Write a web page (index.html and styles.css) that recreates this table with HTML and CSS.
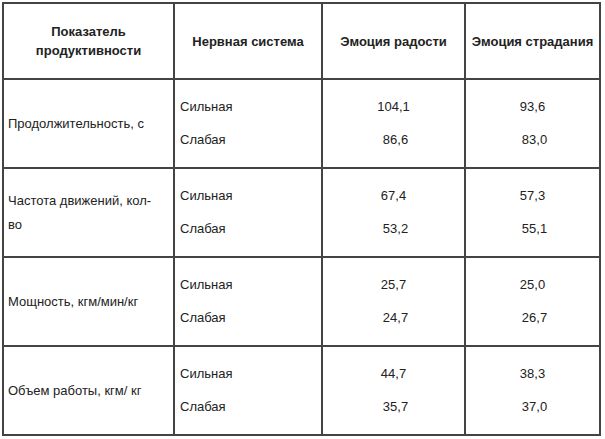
FILE: index.html
```html
<!DOCTYPE html>
<html lang="ru">
<head>
<meta charset="utf-8">
<link rel="stylesheet" href="styles.css">
</head>
<body>
<div class="table">
  <div class="cell head">Показатель<br>продуктивности</div>
  <div class="cell head">Нервная система</div>
  <div class="cell head">Эмоция радости</div>
  <div class="cell head">Эмоция страдания</div>

  <div class="cell label">Продолжительность, с</div>
  <div class="cell pair left"><span>Сильная</span><span>Слабая</span></div>
  <div class="cell pair num"><span>104,1</span><span class="shift">86,6</span></div>
  <div class="cell pair num"><span>93,6</span><span class="shift">83,0</span></div>

  <div class="cell label">Частота движений, кол-<br>во</div>
  <div class="cell pair left"><span>Сильная</span><span>Слабая</span></div>
  <div class="cell pair num"><span>67,4</span><span class="shift">53,2</span></div>
  <div class="cell pair num"><span>57,3</span><span class="shift">55,1</span></div>

  <div class="cell label">Мощность, кгм/мин/кг</div>
  <div class="cell pair left"><span>Сильная</span><span>Слабая</span></div>
  <div class="cell pair num"><span>25,7</span><span class="shift">24,7</span></div>
  <div class="cell pair num"><span>25,0</span><span class="shift">26,7</span></div>

  <div class="cell label">Объем работы, кгм/ кг</div>
  <div class="cell pair left"><span>Сильная</span><span>Слабая</span></div>
  <div class="cell pair num"><span>44,7</span><span class="shift">35,7</span></div>
  <div class="cell pair num"><span>38,3</span><span class="shift">37,0</span></div>
</div>
</body>
</html>
```
FILE: styles.css
```css
html, body {
  margin: 0;
  padding: 0;
  background: #ffffff;
}
body {
  font-family: "Liberation Sans", Arial, sans-serif;
  font-size: 13px;
  color: #222222;
}
.table {
  margin: 2px 0 0 2px;
  width: 599px;
  box-sizing: border-box;
  display: grid;
  grid-template-columns: 169px 146px 141px 133px;
  grid-template-rows: 74px repeat(4, 87px);
  gap: 2px;
  padding: 2px;
  background: #444444;
}
.cell {
  background: #ffffff;
  box-sizing: border-box;
  display: flex;
  align-items: center;
  padding: 0 5px;
}
.head {
  font-weight: bold;
  justify-content: center;
  text-align: center;
  line-height: 19px;
}
.label {
  display: block;
  align-self: stretch;
  padding: 0 4px;
  line-height: 24px;
  display: flex;
  flex-direction: column;
  justify-content: center;
  align-items: flex-start;
}
.pair {
  flex-direction: column;
  justify-content: center;
  gap: 17px;
  line-height: 16px;
}
.pair.left {
  align-items: flex-start;
}
.pair.num {
  align-items: center;
}
.shift {
  padding-left: 4px;
}
```
